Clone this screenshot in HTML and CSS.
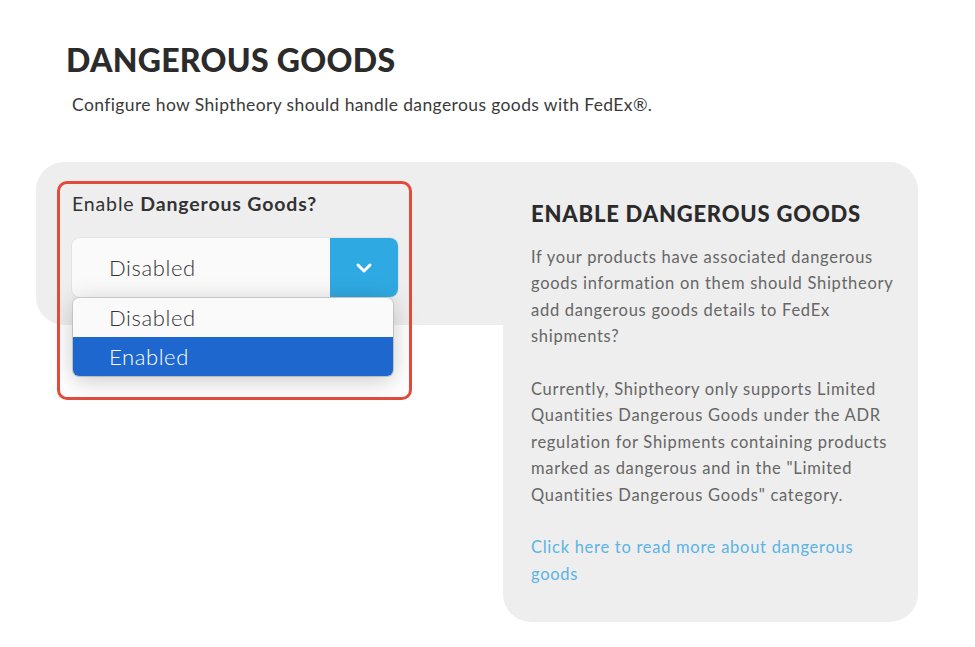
FILE: index.html
```html
<!DOCTYPE html>
<html>
<head>
<meta charset="utf-8">
<link rel="stylesheet" href="styles.css">
</head>
<body>
<div class="page">
  <h1 class="title">DANGEROUS GOODS</h1>
  <p class="subtitle">Configure how Shiptheory should handle dangerous goods with FedEx®.</p>
  <div class="panel">
    <div class="left">
      <div class="field">
        <div class="label">Enable <b>Dangerous Goods?</b></div>
        <div class="select">
          <div class="value">Disabled</div>
          <div class="btn">
            <svg width="18" height="12" viewBox="0 0 18 12"><path d="M3 3 L9 9 L15 3" fill="none" stroke="#fff" stroke-width="3" stroke-linecap="round" stroke-linejoin="round"/></svg>
          </div>
        </div>
        <div class="menu">
          <div class="opt">Disabled</div>
          <div class="opt sel">Enabled</div>
        </div>
        <div class="highlight"></div>
      </div>
    </div>
    <div class="right">
      <h2 class="heading">ENABLE DANGEROUS GOODS</h2>
      <p class="text">If your products have associated dangerous goods information on them should Shiptheory add dangerous goods details to FedEx shipments?</p>
      <p class="text">Currently, Shiptheory only supports Limited Quantities Dangerous Goods under the ADR regulation for Shipments containing products marked as dangerous and in the "Limited Quantities Dangerous Goods" category.</p>
      <p class="text link">Click here to read more about dangerous goods</p>
    </div>
  </div>
</div>
</body>
</html>
```

FILE: styles.css
```css
html, body { margin: 0; padding: 0; background: #fff; }
body { font-family: "Lato", "Liberation Sans", sans-serif; color: #333; }
.page { padding: 40px 0 0 36px; width: 882px; }
.title { margin: 0 0 0 30px; font-size: 32px; font-weight: 900; color: #2b2b2b; letter-spacing: 0.3px; line-height: 40px; }
.subtitle { margin: 13px 0 0 36px; font-size: 17.5px; font-weight: 400; color: #3a3a3a; line-height: 24px; letter-spacing: 0.38px; }
.panel { display: flex; align-items: flex-start; margin-top: 45px; }
.left { width: 467px; height: 163px; background: #eeeeee; border-radius: 28px 0 0 28px; flex: none; }
.right { flex: 1; background: #eeeeee; border-radius: 0 28px 28px 28px; padding: 38px 18px 32px 28px; height: 460px; box-sizing: border-box; }
.field { position: relative; margin: 30px 0 0 36px; width: 326px; }
.label { font-size: 19.5px; color: #333; line-height: 24px; letter-spacing: 0.85px; }
.label b { font-weight: 700; }
.select { display: flex; margin-top: 22px; height: 59px; border-radius: 8px; background: #fafafa; box-shadow: 0 0 0 1px #e3e3e3; overflow: hidden; }
.value { flex: 1; font-size: 22px; font-weight: 300; color: #333; padding-left: 37px; line-height: 59px; letter-spacing: 0.6px; }
.btn { width: 68px; background: #2fa9e2; display: flex; align-items: center; justify-content: center; }
.menu { position: absolute; left: 1px; top: 106px; width: 320px; background: #fafafa; border-radius: 6px; overflow: hidden; box-shadow: 0 4px 24px rgba(0,0,0,0.22), 0 0 0 1px #d6d6d6; }
.opt { height: 39px; line-height: 39px; font-size: 22px; font-weight: 300; color: #333; padding-left: 36px; letter-spacing: 0.6px; }
.opt.sel { background: #1e67cf; color: #fff; }
.highlight { position: absolute; left: -15px; top: -11px; width: 349px; height: 213px; border: 3px solid #e24b3b; border-radius: 10px; }
.heading { margin: 0; font-size: 22px; font-weight: 900; color: #2b2b2b; line-height: 28px; letter-spacing: 0.8px; }
.text { margin: 16px 0 0 0; font-size: 16.5px; line-height: 26.4px; color: #666; font-weight: 400; letter-spacing: 0.72px; }
.text + .text { margin-top: 26.4px; }
.link { color: #5ab4e5; }
```
